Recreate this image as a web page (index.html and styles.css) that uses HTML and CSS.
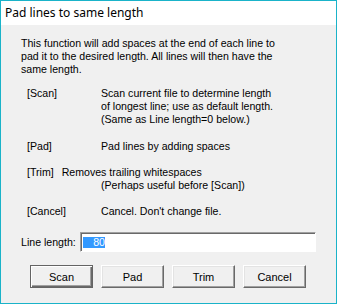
FILE: index.html
```html
<html>

<head>
    <title>Pad lines to same length</title>
    <link rel="stylesheet" href="styles.css">
</head>

<body>
    <div class="dialog">
        <div class="titlebar">Pad lines to same length</div>

        <div class="content">
            <p class="intro">This function will add spaces at the end of each line to<br>
                pad it to the desired length. All lines will then have the<br>
                same length.</p>

            <div class="opt opt-scan">
                <span class="key">[Scan]</span>
                <span class="desc">Scan current file to determine length<br>
                    of longest line; use as default length.<br>
                    (Same as Line length=0 below.)</span>
            </div>

            <div class="opt">
                <span class="key">[Pad]</span>
                <span class="desc">Pad lines by adding spaces</span>
            </div>

            <div class="opt-trim">
                <span class="trimkey">[Trim]</span>Removes trailing whitespaces<br>
                <span class="indent">(Perhaps useful before [Scan])</span>
            </div>

            <div class="opt last">
                <span class="key">[Cancel]</span>
                <span class="desc">Cancel. Don't change file.</span>
            </div>
        </div>

        <div class="field">
            <span class="label">Line length:</span>
            <div class="textbox"><span class="selected">80</span></div>
        </div>

        <div class="buttons">
            <button class="btn default">Scan</button>
            <button class="btn">Pad</button>
            <button class="btn">Trim</button>
            <button class="btn">Cancel</button>
        </div>
    </div>
</body>

</html>
```

FILE: styles.css
```css
body {
    margin: 0;
    background: #f0f0f0;
}

.dialog {
    box-sizing: border-box;
    width: 337px;
    height: 304px;
    border: 1px solid #1ab3c9;
    background-color: #f0f0f0;
    font-family: "Liberation Sans", Arial, sans-serif;
    font-size: 10.6px;
    line-height: 13px;
    color: #000;
}

.titlebar {
    height: 24px;
    background-color: #fff;
    font-family: "Noto Sans", sans-serif;
    font-size: 12px;
    line-height: 24px;
    padding-left: 4px;
}

.content {
    padding: 12px 0 0 20px;
}

.intro {
    margin: 0 0 11px 0;
}

.opt {
    display: flex;
    margin-left: 6px;
    margin-bottom: 13px;
}

.opt-scan {
    margin-bottom: 14px;
}

.opt.last {
    margin-bottom: 0;
}

.key {
    width: 74px;
    flex-shrink: 0;
}

.opt-trim {
    margin-left: 6px;
    margin-bottom: 13px;
}

.trimkey {
    margin-right: 8px;
}

.indent {
    padding-left: 74px;
}

.field {
    display: flex;
    align-items: center;
    padding: 14px 0 0 20px;
}

.label {
    width: 59px;
}

.textbox {
    box-sizing: border-box;
    width: 236px;
    height: 20px;
    background-color: #fff;
    border: 1px solid;
    border-color: #a0a0a0 #fff #fff #a0a0a0;
    box-shadow: inset 1px 1px #696969;
    padding: 4px 0 0 2px;
}

.selected {
    display: inline-block;
    width: 22px;
    height: 11px;
    line-height: 11px;
    background-color: #3399ff;
    color: #fff;
    text-align: right;
}

.buttons {
    display: flex;
    gap: 8px;
    padding: 13px 0 0 29px;
}

.btn {
    box-sizing: border-box;
    width: 63px;
    height: 23px;
    padding: 0;
    font-family: "Liberation Sans", Arial, sans-serif;
    font-size: 11px;
    color: #000;
    background-color: #f0f0f0;
    border: 1px solid;
    border-color: #fff #696969 #696969 #fff;
    box-shadow: inset -1px -1px #a0a0a0, inset 1px 1px #e3e3e3;
}

.btn.default {
    border-color: #646464;
    box-shadow: inset 1px 1px #fff, inset -1px -1px #696969, inset -2px -2px #a0a0a0;
}
```
